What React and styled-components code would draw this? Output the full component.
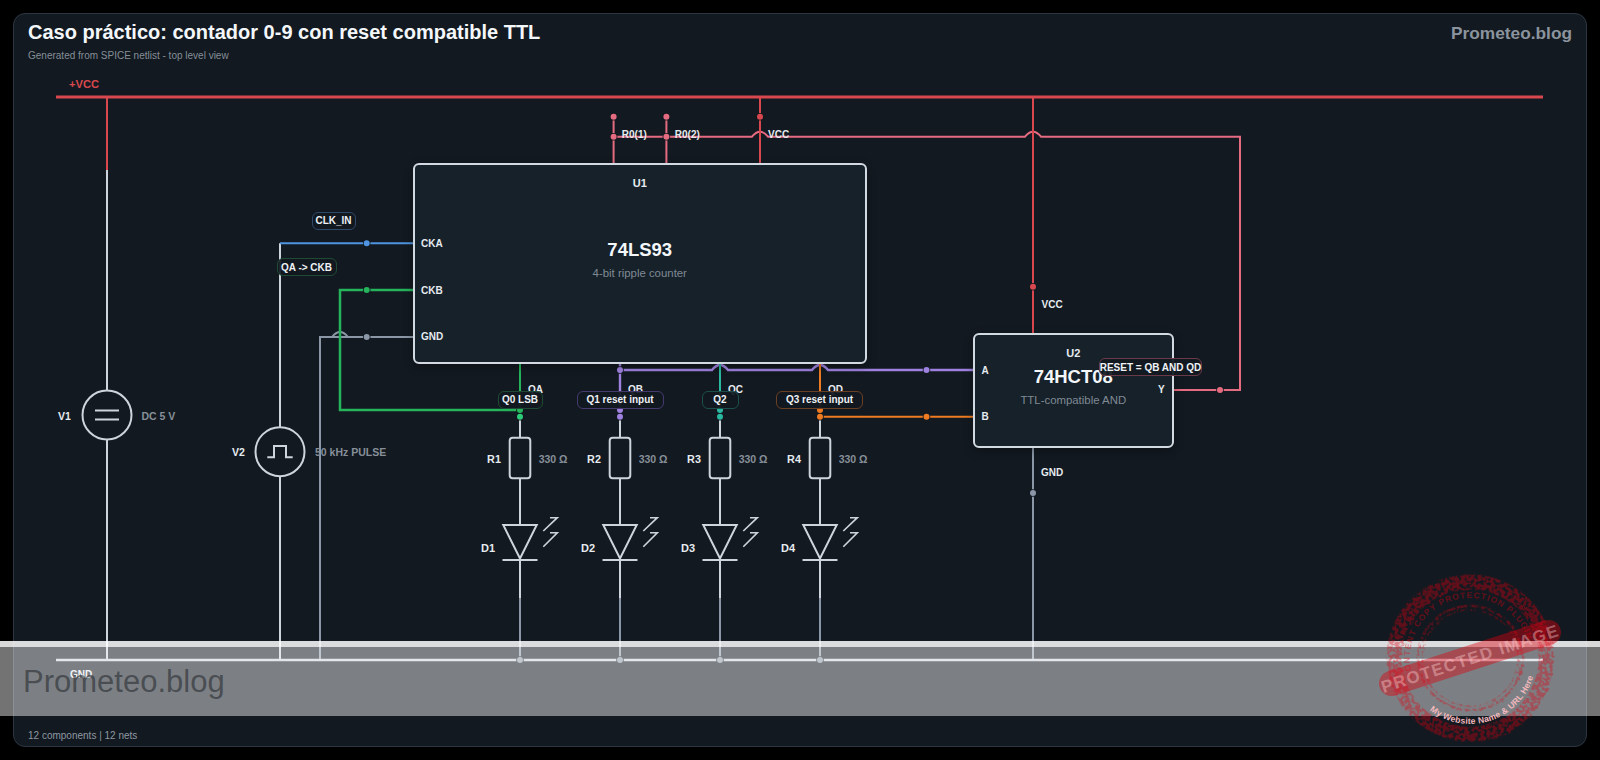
import React from 'react';
import styled, { createGlobalStyle } from 'styled-components';

// canvas origin in page pixels, the schematic below is noted in page pixels
const OX = 14;
const OY = 66;

const colors = {
  bg: '#121920',
  chip: '#16212a',
  line: '#cdd4dc',
  slate: '#8b97a6',
  red: '#d9484f',
  pink: '#e56b80',
  blue: '#4f94e0',
  green: '#25b35c',
  purple: '#9f82e0',
  teal: '#2ab8a0',
  orange: '#ee7b22',
};

const GlobalStyle = createGlobalStyle`
  html, body {
    margin: 0;
    padding: 0;
    background: #000;
    font-family: "Liberation Sans", Arial, sans-serif;
  }
`;

const Page = styled('div')`
  position: relative;
  box-sizing: border-box;
  width: 1600px;
  height: 760px;
  padding: 13px;
  overflow: hidden;
  background: #000;
`;

const Panel = styled('section')`
  box-sizing: border-box;
  display: flex;
  flex-direction: column;
  width: 1574px;
  height: 734px;
  border: 1px solid #2b3640;
  border-radius: 12px;
  background: ${colors.bg};
`;

const Header = styled('header')`
  box-sizing: border-box;
  flex: 0 0 52px;
  display: flex;
  justify-content: space-between;
  align-items: flex-start;
  padding: 6px 14px 0 14px;
`;

const Title = styled('h1')`
  margin: 0;
  font-size: 20px;
  line-height: 24px;
  font-weight: 700;
  color: #f4f7fa;
`;

const Subtitle = styled('p')`
  margin: 6px 0 0 0;
  font-size: 10px;
  line-height: 12px;
  color: #858e98;
`;

const Brand = styled('div')`
  margin-top: 1px;
  font-size: 17.3px;
  line-height: 24px;
  font-weight: 700;
  color: #8b949e;
`;

const Canvas = styled('div')`
  position: relative;
  flex: 1 1 auto;
`;

const Wires = styled('svg')`
  position: absolute;
  left: 0;
  top: 0;
  width: 100%;
  height: 100%;
`;

const Footer = styled('footer')`
  box-sizing: border-box;
  flex: 0 0 29px;
  display: flex;
  align-items: center;
  padding: 7px 14px 0 14px;
  font-size: 10px;
  color: #8f98a2;
`;

const Chip = styled('div')`
  position: absolute;
  box-sizing: border-box;
  left: ${p => p.$x - OX}px;
  top: ${p => p.$y - OY}px;
  width: ${p => p.$w}px;
  height: ${p => p.$h}px;
  display: flex;
  flex-direction: column;
  align-items: center;
  padding-top: 11px;
  border: 2px solid #d3d9e0;
  border-radius: 6px;
  background: ${colors.chip};
  box-shadow: 0 3px 10px rgba(0, 0, 0, 0.3);
`;

const ChipRef = styled('div')`
  font-size: 11px;
  line-height: 14px;
  font-weight: 700;
  color: #e6ebf0;
`;

const ChipPart = styled('div')`
  margin-top: ${p => p.$gap}px;
  font-size: 18.5px;
  line-height: 22px;
  font-weight: 700;
  color: #f4f7fa;
`;

const ChipNote = styled('div')`
  margin-top: 5px;
  font-size: 11.4px;
  line-height: 14px;
  color: #808a94;
`;

const toneColor = {
  pin: '#e6ebf0',
  value: '#868f99',
  rail: colors.red,
};

const NetText = styled('span')`
  position: absolute;
  left: ${p => p.$x - OX}px;
  top: ${p => p.$y - OY}px;
  transform: translate(${p => (p.$center ? '-50%' : '0')}, -50%);
  font-size: ${p => p.$size || 10}px;
  line-height: 12px;
  font-weight: 700;
  white-space: nowrap;
  color: ${p => toneColor[p.$tone || 'pin']};
`;

const Badge = styled('span')`
  position: absolute;
  box-sizing: border-box;
  left: ${p => p.$x - OX}px;
  top: ${p => p.$y - OY}px;
  width: ${p => p.$w}px;
  height: 18px;
  display: flex;
  align-items: center;
  justify-content: center;
  border: 1px solid ${p => p.$edge};
  border-radius: 6px;
  background: rgba(18, 25, 32, 0.93);
  font-size: 10px;
  font-weight: 700;
  white-space: nowrap;
  color: #eef2f6;
`;

const StripLine = styled('div')`
  position: absolute;
  left: 0;
  top: 641px;
  width: 1600px;
  height: 6px;
  background: rgba(255, 255, 255, 0.85);
`;

const Band = styled('div')`
  position: absolute;
  box-sizing: border-box;
  left: 0;
  top: 647px;
  width: 1600px;
  height: 69px;
  padding: 17px 0 0 23px;
  background: rgba(255, 255, 255, 0.45);
  font-size: 31px;
  line-height: 36px;
  color: rgba(40, 44, 50, 0.62);
`;

const Stamp = styled('svg')`
  position: absolute;
  left: 1370px;
  top: 558px;
  width: 200px;
  height: 200px;
`;

// small bump where a horizontal net jumps over a vertical one
const hop = (x, y) =>
  `L${x - 8} ${y} Q${x - 4} ${y - 5} ${x} ${y - 5} Q${x + 4} ${y - 5} ${x + 8} ${y}`;

const nets = [
  { c: colors.red, w: 3, d: 'M56 97 H1543' },
  { c: colors.red, d: 'M107 97 V170' },
  { c: colors.line, d: 'M107 170 V390.5 M107 439.5 V660' },
  { c: colors.line, d: 'M280 243.3 V427 M280 476 V660' },
  { c: colors.slate, d: `M413 337 ${hop(340, 337)} L320 337 V660` },
  { c: colors.blue, d: 'M280 243.3 H413' },
  { c: colors.pink, d: 'M613.6 116.7 V163 M666.4 116.7 V163' },
  { c: colors.pink, d: `M613.6 136.7 ${hop(760, 136.7)} ${hop(1033, 136.7)} L1240 136.7 V390 H1173` },
  { c: colors.red, d: 'M760 97 V163 M1033 97 V333' },
  { c: colors.slate, d: 'M1033 447 V660' },
  { c: colors.purple, w: 2.4, d: `M620 363 V416.7 M620 370 ${hop(720, 370)} ${hop(820, 370)} L973 370` },
  { c: colors.teal, d: 'M720 363 V416.7' },
  { c: colors.orange, d: 'M820 363 V416.7 H973' },
  { c: colors.green, w: 2.5, d: 'M413 290 H340 V410 H520' },
  { c: colors.green, d: 'M520 363 V416.7' },
  { c: colors.line, w: 2.5, d: 'M56 660 H1543' },
];

const dots = [
  [366.7, 243.3, colors.blue],
  [366.7, 290, colors.green],
  [366.7, 337, colors.slate],
  [760, 116.7, colors.red],
  [1033, 286.7, colors.red],
  [613.6, 116.7, colors.pink],
  [666.4, 116.7, colors.pink],
  [613.6, 136.7, colors.pink],
  [666.4, 136.7, colors.pink],
  [1220, 390, colors.pink],
  [620, 370, colors.purple],
  [926.5, 370, colors.purple],
  [620, 410, colors.purple],
  [620, 416.7, colors.purple],
  [520, 410, colors.green],
  [520, 416.7, '#2ecc78'],
  [720, 410, colors.teal],
  [720, 416.7, colors.teal],
  [820, 410, colors.orange],
  [820, 416.7, colors.orange],
  [926.5, 416.7, colors.orange],
  [1033, 493, colors.slate],
  [520, 660, colors.slate],
  [620, 660, colors.slate],
  [720, 660, colors.slate],
  [820, 660, colors.slate],
];

const outputs = [
  { x: 520, r: 'R1', d: 'D1', pin: 'QA' },
  { x: 620, r: 'R2', d: 'D2', pin: 'QB' },
  { x: 720, r: 'R3', d: 'D3', pin: 'QC' },
  { x: 820, r: 'R4', d: 'D4', pin: 'QD' },
];

const badges = [
  { x: 311.5, y: 211.5, w: 44, edge: '#30496a', text: 'CLK_IN' },
  { x: 276.5, y: 258, w: 60, edge: '#1f4a33', text: 'QA -> CKB' },
  { x: 497.5, y: 390.5, w: 45, edge: '#1f4a33', text: 'Q0 LSB' },
  { x: 576.5, y: 390.5, w: 87, edge: '#453a70', text: 'Q1 reset input' },
  { x: 701.5, y: 390.5, w: 37, edge: '#1c4f4b', text: 'Q2' },
  { x: 776, y: 390.5, w: 87, edge: '#6b4022', text: 'Q3 reset input' },
  { x: 1099, y: 358, w: 103, edge: '#6b3a48', text: 'RESET = QB AND QD' },
];

const pins = [
  { x: 421, y: 244, text: 'CKA' },
  { x: 421, y: 290.5, text: 'CKB' },
  { x: 421, y: 337, text: 'GND' },
  { x: 621.8, y: 134.7, text: 'R0(1)' },
  { x: 674.8, y: 134.7, text: 'R0(2)' },
  { x: 768, y: 134.7, text: 'VCC' },
  { x: 1041.5, y: 304.7, text: 'VCC' },
  { x: 1041, y: 473, text: 'GND' },
  { x: 981.5, y: 370.5, text: 'A' },
  { x: 981.5, y: 416.7, text: 'B' },
  { x: 1158, y: 390, text: 'Y' },
  { x: 70, y: 675, text: 'GND' },
];

const Resistor = ({ x }) => (
  <g fill="none" stroke={colors.line} strokeWidth="2">
    <path d={`M${x} 416.7 V437.7 M${x} 478.3 V525`} />
    <rect x={x - 10.3} y="437.7" width="20.6" height="40.6" rx="3" fill={colors.bg} />
  </g>
);

const Led = ({ x }) => (
  <g fill="none" stroke={colors.line} strokeWidth="2" strokeLinejoin="miter">
    <path d={`M${x - 16.7} 525 H${x + 16.7} L${x} 558.5 Z`} />
    <path d={`M${x - 17.5} 560 H${x + 17.5} M${x} 560 V598`} />
    <path d={`M${x} 598 V660`} stroke={colors.slate} />
    <g strokeWidth="1.6">
      <path d={`M${x + 23.3} 531 L${x + 37.3} 517.7 H${x + 30}`} />
      <path d={`M${x + 23.3} 546.7 L${x + 37.3} 532.7 H${x + 30}`} />
    </g>
  </g>
);

const Schematic = () => (
  <Canvas>
    <Wires viewBox={`${OX} ${OY} 1572 651`}>
      {nets.map((net, index) => (
        <path
          key={index}
          d={net.d}
          fill="none"
          stroke={net.c}
          strokeWidth={net.w || 2}
          strokeLinejoin="miter"
        />
      ))}
      <g fill="none" stroke={colors.line} strokeWidth="2">
        <circle cx="107" cy="415" r="24.5" />
        <path d="M95 410.5 H119 M95 419.5 H119" />
        <circle cx="280" cy="451.7" r="24.5" />
        <path d="M267.3 457.3 H274 V446 H286 V457.3 H292.7" />
      </g>
      {outputs.map(o => (
        <g key={o.r}>
          <Resistor x={o.x} />
          <Led x={o.x} />
        </g>
      ))}
      {dots.map(([x, y, c], index) => (
        <circle key={index} cx={x} cy={y} r="3" fill={c} stroke={colors.bg} strokeWidth="1.6" paintOrder="stroke" />
      ))}
    </Wires>

    <NetText $x={69} $y={84} $tone="rail" $size={11.2}>+VCC</NetText>
    <NetText $x={58} $y={415.5} $size={10.5}>V1</NetText>
    <NetText $x={141.5} $y={415.5} $tone="value" $size={10.5}>DC 5 V</NetText>
    <NetText $x={232} $y={451.7} $size={10.5}>V2</NetText>
    <NetText $x={315} $y={451.7} $tone="value" $size={10.5}>50 kHz PULSE</NetText>

    <Chip $x={412.5} $y={162.5} $w={454.5} $h={201.5}>
      <ChipRef>U1</ChipRef>
      <ChipPart $gap={49}>74LS93</ChipPart>
      <ChipNote>4-bit ripple counter</ChipNote>
    </Chip>
    <Chip $x={972.5} $y={332.5} $w={201.5} $h={115}>
      <ChipRef>U2</ChipRef>
      <ChipPart $gap={6}>74HCT08</ChipPart>
      <ChipNote>TTL-compatible AND</ChipNote>
    </Chip>

    {pins.map(pin => (
      <NetText key={`${pin.text}-${pin.x}`} $x={pin.x} $y={pin.y}>
        {pin.text}
      </NetText>
    ))}

    {outputs.map(o => (
      <React.Fragment key={o.pin}>
        <NetText $x={o.x + 8} $y={390}>{o.pin}</NetText>
        <NetText $x={o.x - 26} $y={458.5} $center $size={10.8}>{o.r}</NetText>
        <NetText $x={o.x + 18.7} $y={458.5} $tone="value" $size={10.5}>330 Ω</NetText>
        <NetText $x={o.x - 32} $y={547.5} $center $size={11}>{o.d}</NetText>
      </React.Fragment>
    ))}

    {badges.map(badge => (
      <Badge key={badge.text} $x={badge.x} $y={badge.y} $w={badge.w} $edge={badge.edge}>
        {badge.text}
      </Badge>
    ))}
  </Canvas>
);

const ProtectedStamp = () => (
  <Stamp viewBox="0 0 200 200">
    <defs>
      <filter id="grunge" x="-10%" y="-10%" width="120%" height="120%" colorInterpolationFilters="sRGB">
        <feTurbulence type="fractalNoise" baseFrequency="0.3" numOctaves="2" seed="4" result="noise" />
        <feDisplacementMap in="SourceGraphic" in2="noise" scale="4" result="rough" />
        <feColorMatrix
          in="noise"
          type="matrix"
          values="0 0 0 0 0  0 0 0 0 0  0 0 0 0 0  0 0 0 -9 5.4"
          result="speckle"
        />
        <feComposite in="rough" in2="speckle" operator="in" />
      </filter>
      <path id="stampTop" d="M40 100 A60 60 0 0 1 160 100" />
      <path id="stampBottom" d="M34 100 A66 66 0 0 0 166 100" />
    </defs>
    <g transform="rotate(-18 100 100)">
      <g fill="none" stroke="#e0000f" strokeOpacity="0.38" filter="url(#grunge)">
        <circle cx="100" cy="100" r="76" strokeWidth="15" />
        <circle cx="100" cy="100" r="52" strokeWidth="2.5" />
        <circle cx="100" cy="100" r="48" strokeWidth="1.5" strokeDasharray="5 2" />
      </g>
      <text fill="#e0000f" fillOpacity="0.4" fontSize="8.5" fontWeight="700" letterSpacing="1" textAnchor="middle">
        <textPath href="#stampTop" startOffset="50%">CONTENT COPY PROTECTION PLUGIN</textPath>
      </text>
      <rect x="5" y="87.5" width="190" height="25" rx="12.5" fill="#e0000f" fillOpacity="0.42" />
      <text
        x="100"
        y="106.5"
        fill="#ffd8d8"
        fillOpacity="0.4"
        fontSize="17"
        fontWeight="700"
        letterSpacing="1.4"
        textAnchor="middle"
      >
        PROTECTED IMAGE
      </text>
      <text fill="#f2b8bc" fontSize="8.6" fontWeight="700" letterSpacing="0.2" textAnchor="middle">
        <textPath href="#stampBottom" startOffset="50%">My Website Name &amp; URL Here</textPath>
      </text>
    </g>
  </Stamp>
);

export default function App() {
  return (
    <Page>
      <GlobalStyle />
      <Panel>
        <Header>
          <div>
            <Title>Caso práctico: contador 0-9 con reset compatible TTL</Title>
            <Subtitle>Generated from SPICE netlist - top level view</Subtitle>
          </div>
          <Brand>Prometeo.blog</Brand>
        </Header>
        <Schematic />
        <Footer>12 components | 12 nets</Footer>
      </Panel>
      <StripLine />
      <Band>Prometeo.blog</Band>
      <ProtectedStamp />
    </Page>
  );
}
